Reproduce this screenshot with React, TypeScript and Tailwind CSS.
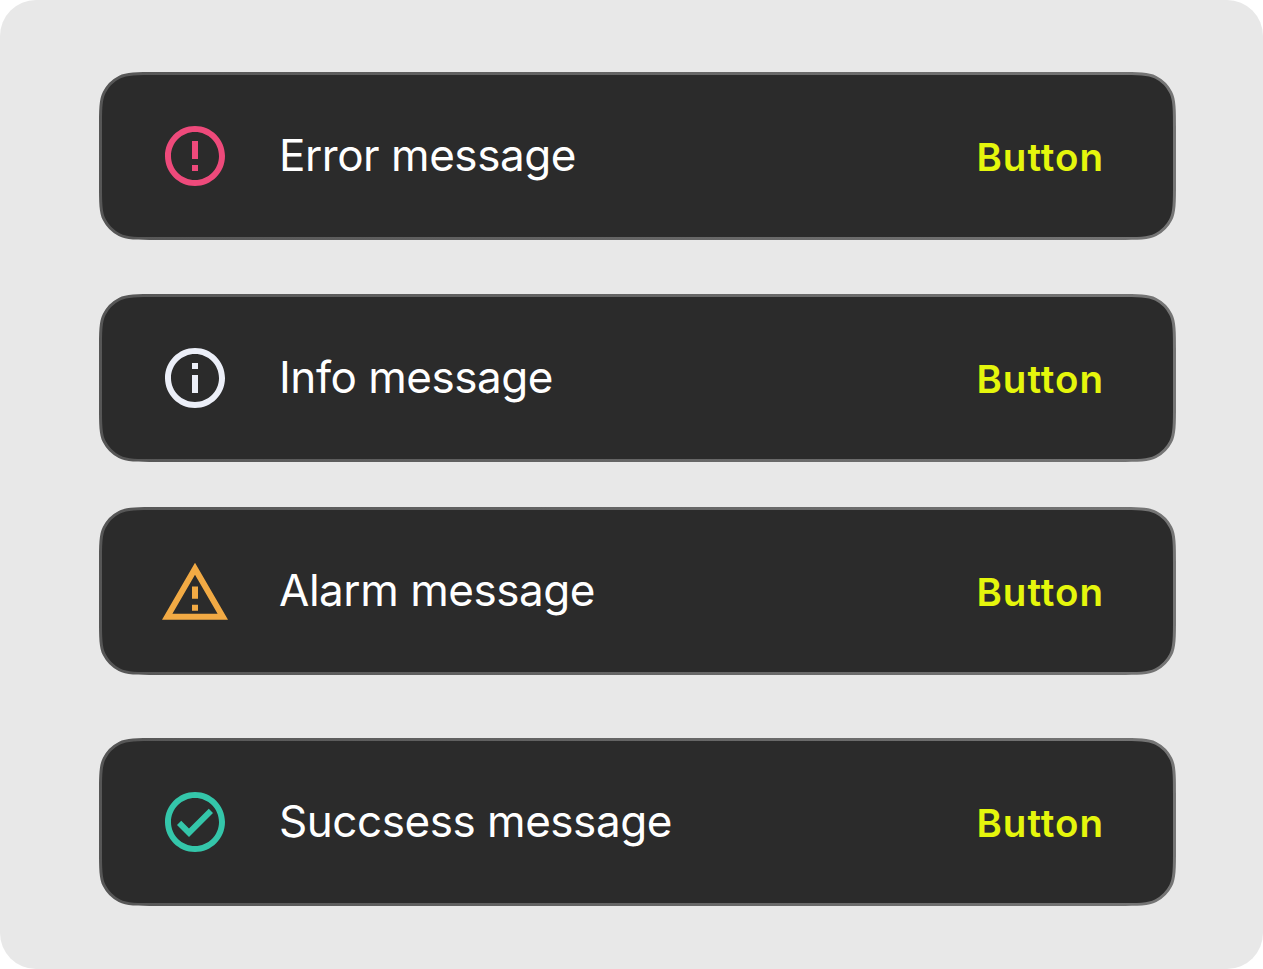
const CARD_CLIP =
  "[clip-path:path('M57.6_0H1019.4C1039.57_0_1049.65_0_1057.34_3.92A36_36_0_0_1_1073.08_19.66C1077_27.35_1077_37.43_1077_57.6V110.4C1077_130.57_1077_140.65_1073.08_148.34A36_36_0_0_1_1057.34_164.08C1049.65_168_1039.57_168_1019.4_168H57.6C37.43_168_27.35_168_19.66_164.08A36_36_0_0_1_3.92_148.34C0_140.65_0_130.57_0_110.4V57.6C0_37.43_0_27.35_3.92_19.66A36_36_0_0_1_19.66_3.92C27.35_0_37.43_0_57.6_0Z')]";
const FILL_CLIP =
  "[clip-path:path('M54.6_0H1016.4C1036.1_0_1045.92_0_1052.98_3.6A33_33_0_0_1_1067.4_18.02C1071_25.08_1071_34.9_1071_54.6V107.4C1071_127.1_1071_136.92_1067.4_143.98A33_33_0_0_1_1052.98_158.4C1045.92_162_1036.1_162_1016.4_162H54.6C34.9_162_25.08_162_18.02_158.4A33_33_0_0_1_3.6_143.98C0_136.92_0_127.1_0_107.4V54.6C0_34.9_0_25.08_3.6_18.02A33_33_0_0_1_18.02_3.6C25.08_0_34.9_0_54.6_0Z')]";

type RowProps = { text: string; color: string; icon: string; gap: string };

const rows: RowProps[] = [
  {
    text: "Error message",
    color: "text-[#ee4a7b]",
    gap: "mt-[72px]",
    icon: "M11 15h2v2h-2zm0-8h2v6h-2zm.99-5C6.47 2 2 6.48 2 12s4.47 10 9.99 10C17.52 22 22 17.52 22 12S17.52 2 11.99 2zM12 20c-4.42 0-8-3.58-8-8s3.58-8 8-8 8 3.58 8 8-3.58 8-8 8z",
  },
  {
    text: "Info message",
    color: "text-[#eceff8]",
    gap: "mt-[54px]",
    icon: "M11 7h2v2h-2zm0 4h2v6h-2zm1-9C6.48 2 2 6.48 2 12s4.48 10 10 10 10-4.48 10-10S17.52 2 12 2zm0 18c-4.41 0-8-3.59-8-8s3.59-8 8-8 8 3.59 8 8-3.59 8-8 8z",
  },
  {
    text: "Alarm message",
    color: "text-[#f2aa44]",
    gap: "mt-[45px]",
    icon: "M12 6.6 19.53 19.6H4.47L12 6.6M1 21.6h22L12 2.6 1 21.6zm12-5h-2v2h2v-2zm0-6.1h-2v4.1h2v-4.1z",
  },
  {
    text: "Succsess message",
    color: "text-[#34c6aa]",
    gap: "mt-[63px]",
    icon: "M16.59 7.58 10 14.17l-2.59-2.58L6 13l4 4 8-8zM12 2C6.48 2 2 6.48 2 12s4.48 10 10 10 10-4.48 10-10S17.52 2 12 2zm0 18c-4.42 0-8-3.58-8-8s3.58-8 8-8 8 3.58 8 8-3.58 8-8 8z",
  },
];

function MessageRow({ text, color, icon, gap }: RowProps) {
  return (
    <div className={`h-[168px] w-[1077px] bg-linear-to-r from-[#565656] to-[#757575] p-[3px] ${CARD_CLIP} ${gap}`}>
      <div className={`flex h-full items-center bg-[#2b2b2b] pl-[57px] pr-[69px] ${FILL_CLIP}`}>
        <svg className={`size-[72px] shrink-0 ${color}`} viewBox="0 0 24 24" fill="currentColor">
          <path d={icon} />
        </svg>
        <span className="ml-[48px] pb-[2px] text-[44px] leading-[60px] tracking-[-0.46px] text-white">{text}</span>
        <button className="ml-auto pt-[1px] text-[38.5px] leading-[60px] font-semibold tracking-[1px] text-[#e5f60c]">
          Button
        </button>
      </div>
    </div>
  );
}

export default function App() {
  return (
    <main className="flex h-[969px] w-[1263px] flex-col overflow-hidden rounded-[36px] bg-[#e8e8e8] pl-[99px] font-['Inter',sans-serif]">
      {rows.map((row) => (
        <MessageRow key={row.text} {...row} />
      ))}
    </main>
  );
}
